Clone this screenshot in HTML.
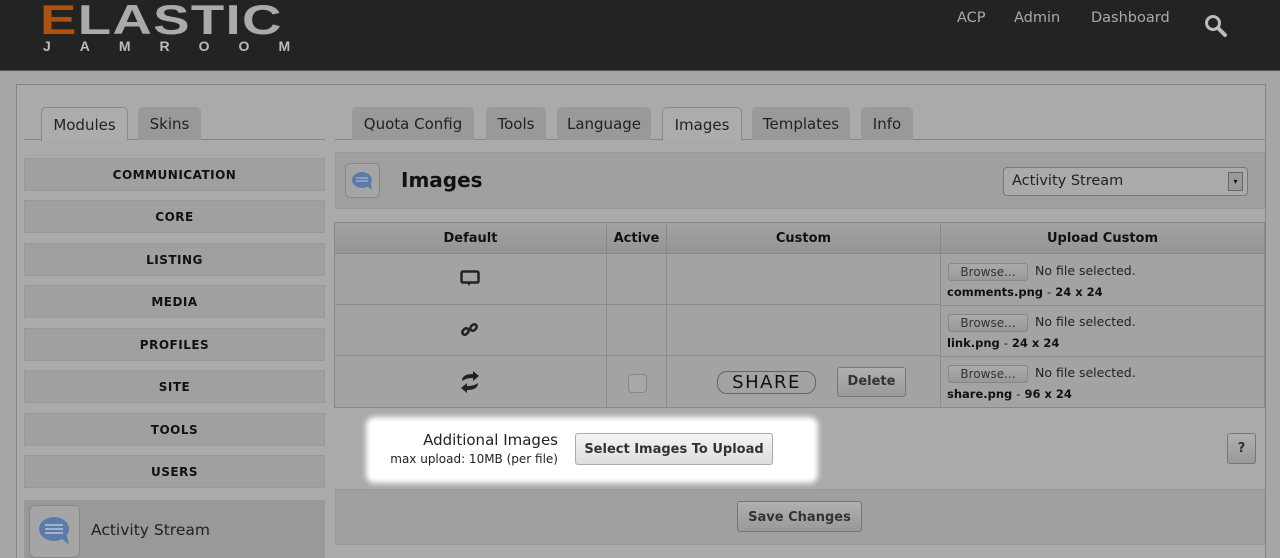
<!DOCTYPE html>
<html><head><meta charset="utf-8"><style>
*{box-sizing:border-box;margin:0;padding:0}
html,body{width:1280px;height:558px;overflow:hidden}
body{background:#a6a6a6;font-family:"DejaVu Sans","Liberation Sans",sans-serif;color:#111;position:relative}
.hdr{position:absolute;left:0;top:0;width:1280px;height:71px;background:#232323;border-bottom:1px solid #555}
.logo1{position:absolute;left:40px;top:-1px;font:bold 42px "Liberation Sans",sans-serif;line-height:42px;letter-spacing:1px;color:#aaa;transform:scaleX(1.3);transform-origin:left}
.logo1 span{color:#b0520f}
.logo2{position:absolute;left:43px;top:38px;font:bold 14px "Liberation Sans",sans-serif;color:#bbb;letter-spacing:29px}
.nav{position:absolute;top:10px;font-size:14.5px;color:#aaa}
.box{position:absolute;left:16px;top:84px;width:1250px;height:480px;border:1px solid #858585;background:#aaa}
.tab{position:absolute;top:107px;height:33px;background:#999;border-radius:5px 5px 0 0;font-size:15px;text-align:center;line-height:34px;color:#222}
.tab.act{background:#acacac;border:1px solid #8a8a8a;border-bottom:none;height:34px}
.line{position:absolute;top:139px;height:1px;background:#878787}
.ni{position:absolute;left:24px;width:301px;height:33px;background:#a0a0a0;border:1px solid #999;font:bold 12px "DejaVu Sans",sans-serif;text-align:center;line-height:33px;letter-spacing:.5px}
.abs{position:absolute}
.th{position:absolute;top:223px;height:31px;font-weight:bold;font-size:13px;text-align:center;line-height:32px;background:linear-gradient(#a2a2a2,#959595);border-right:1px solid #888;border-bottom:1px solid #888}
.td{position:absolute;height:51px;border-right:1px solid #8c8c8c;border-bottom:1px solid #8c8c8c}
.br{position:absolute;left:948px;width:80px;height:18px;border:1px solid #888;border-radius:3px;background:linear-gradient(#aaa,#999);font-size:12px;text-align:center;line-height:16px;color:#333}
.nf{position:absolute;left:1035px;font-size:12.5px;color:#222}
.fn{position:absolute;left:947px;font-size:11.5px;font-weight:bold;color:#111}
.btn{position:absolute;border:1px solid #777;border-radius:3px;background:linear-gradient(#b0b0b0,#999);font-weight:bold;font-size:13px;text-align:center;color:#333}
</style></head><body>
<div class="hdr">
<div class="logo1"><span>E</span>LASTIC</div>
<div class="logo2">JAMROOM</div>
<div class="nav" style="left:957px">ACP</div>
<div class="nav" style="left:1014px">Admin</div>
<div class="nav" style="left:1091px">Dashboard</div>
<svg class="abs" style="left:1203px;top:12px" width="26" height="26" viewBox="0 0 26 26"><circle cx="10" cy="11" r="6.5" fill="none" stroke="#bbb" stroke-width="3"/><path d="M15 16l7 7" stroke="#bbb" stroke-width="4" stroke-linecap="round"/></svg>
</div>
<div class="box"></div>
<div class="line" style="left:24px;width:301px"></div>
<div class="line" style="left:335px;width:930px"></div>
<div class="tab act" style="left:41px;width:87px">Modules</div>
<div class="tab" style="left:138px;width:63px">Skins</div>
<div class="tab" style="left:352px;width:122px">Quota Config</div>
<div class="tab" style="left:486px;width:60px">Tools</div>
<div class="tab" style="left:557px;width:94px">Language</div>
<div class="tab act" style="left:662px;width:80px">Images</div>
<div class="tab" style="left:752px;width:98px">Templates</div>
<div class="tab" style="left:861px;width:52px">Info</div>

<div class="ni" style="top:158px">COMMUNICATION</div>
<div class="ni" style="top:200px">CORE</div>
<div class="ni" style="top:243px">LISTING</div>
<div class="ni" style="top:285px">MEDIA</div>
<div class="ni" style="top:328px">PROFILES</div>
<div class="ni" style="top:370px">SITE</div>
<div class="ni" style="top:413px">TOOLS</div>
<div class="ni" style="top:455px">USERS</div>
<div class="abs" style="left:24px;top:500px;width:301px;height:60px;background:#999"></div>
<div class="abs" style="left:29px;top:505px;width:51px;height:53px;border:1px solid #888;border-radius:6px;background:#a5a5a5"></div>
<svg class="abs" style="left:35px;top:514px" width="40" height="36" viewBox="0 0 40 36"><ellipse cx="19" cy="15" rx="15" ry="12" fill="#5d7ba8"/><path d="M26 24l8 7-2-9z" fill="#5d7ba8"/><path d="M10 11h18M10 15h18M10 19h18" stroke="#b8c4d6" stroke-width="1.5"/></svg>
<div class="abs" style="left:91px;top:521px;font-size:15.5px;color:#222">Activity Stream</div>

<div class="abs" style="left:335px;top:152px;width:930px;height:57px;background:#a0a0a0;border:1px solid #999"></div>
<div class="abs" style="left:345px;top:163px;width:35px;height:35px;border:1px solid #888;border-radius:5px;background:#a5a5a5"></div>
<svg class="abs" style="left:350px;top:170px" width="26" height="22" viewBox="0 0 26 22"><ellipse cx="12" cy="10" rx="10" ry="8" fill="#5d7ba8"/><path d="M17 16l5 4-1-6z" fill="#5d7ba8"/><path d="M6 8h12M6 11h12" stroke="#b8c4d6" stroke-width="1"/></svg>
<div class="abs" style="left:401px;top:168px;font-size:20px;font-weight:bold">Images</div>
<div class="abs" style="left:1003px;top:167px;width:245px;height:29px;border:1px solid #777;border-radius:4px;background:#aaa;font-size:14.5px;line-height:27px;padding-left:8px;color:#222">Activity Stream</div>
<div class="abs" style="left:1228px;top:172px;width:15px;height:19px;background:#999;border:1px solid #666;font-size:8px;text-align:center;line-height:17px">▾</div>

<div class="abs" style="left:334px;top:222px;width:931px;height:186px;border:1px solid #888;background:#a3a3a3"></div>
<div class="th" style="left:335px;width:272px">Default</div>
<div class="th" style="left:607px;width:60px">Active</div>
<div class="th" style="left:667px;width:274px">Custom</div>
<div class="th" style="left:941px;width:323px;border-right:none">Upload Custom</div>
<div class="td" style="left:335px;top:254px;width:272px"></div><div class="td" style="left:607px;top:254px;width:60px"></div><div class="td" style="left:667px;top:254px;width:274px"></div>
<div class="td" style="left:335px;top:305px;width:272px"></div><div class="td" style="left:607px;top:305px;width:60px"></div><div class="td" style="left:667px;top:305px;width:274px"></div>
<div class="td" style="left:335px;top:356px;width:272px;border-bottom:none"></div><div class="td" style="left:607px;top:356px;width:60px;border-bottom:none"></div><div class="td" style="left:667px;top:356px;width:274px;border-bottom:none"></div>
<div class="abs" style="left:941px;top:305px;width:323px;height:1px;background:#8c8c8c"></div>
<div class="abs" style="left:941px;top:356px;width:323px;height:1px;background:#8c8c8c"></div>
<svg class="abs" style="left:460px;top:270px" width="20" height="18" viewBox="0 0 20 18"><rect x="1.5" y="1.5" width="17" height="11" rx="1.5" fill="none" stroke="#222" stroke-width="2.5"/><path d="M7 12l2 4 2-4z" fill="#222"/></svg>
<svg class="abs" style="left:460px;top:320px" width="20" height="20" viewBox="0 0 20 20"><g fill="none" stroke="#222" stroke-width="2.5"><rect x="2" y="9" width="7" height="5" rx="2.5" transform="rotate(-45 5.5 11.5)"/><rect x="10" y="5" width="7" height="5" rx="2.5" transform="rotate(-45 13.5 7.5)"/></g></svg>
<svg class="abs" style="left:459px;top:370px" width="22" height="24" viewBox="0 0 22 24"><path d="M3 11c0-5 4-7 11-7V1l6 5-6 5V8c-5 0-8 1-11 3z" fill="#222"/><path d="M19 13c0 5-4 7-11 7v3l-6-5 6-5v3c5 0 8-1 11-3z" fill="#222"/></svg>
<div class="abs" style="left:628px;top:374px;width:19px;height:19px;border:1px solid #888;border-radius:4px;background:#a8a8a8"></div>
<div class="abs" style="left:717px;top:371px;width:99px;height:23px;border:1px solid #666;border-radius:10px;font-size:18px;text-align:center;line-height:21px;letter-spacing:1.5px">SHARE</div>
<div class="btn" style="left:837px;top:367px;width:69px;height:30px;line-height:28px">Delete</div>
<div class="br" style="top:263px">Browse...</div><div class="nf" style="top:263px">No file selected.</div><div class="fn" style="top:285px">comments.png <span style="font-weight:normal">-</span> 24 x 24</div>
<div class="br" style="top:314px">Browse...</div><div class="nf" style="top:314px">No file selected.</div><div class="fn" style="top:336px">link.png <span style="font-weight:normal">-</span> 24 x 24</div>
<div class="br" style="top:365px">Browse...</div><div class="nf" style="top:365px">No file selected.</div><div class="fn" style="top:387px">share.png <span style="font-weight:normal">-</span> 96 x 24</div>

<div class="abs" style="left:370px;top:421px;width:444px;height:58px;background:#fff;box-shadow:0 0 6px 4px #fff;border-radius:4px"></div>
<div class="abs" style="left:370px;top:431px;width:188px;text-align:right;font-size:15px;color:#222">Additional Images</div>
<div class="abs" style="left:360px;top:452px;width:198px;text-align:right;font-size:12px;color:#222">max upload: 10MB (per file)</div>
<div class="btn" style="left:575px;top:433px;width:198px;height:32px;line-height:32px;background:linear-gradient(#f4f4f4,#ddd);border-color:#aaa">Select Images To Upload</div>
<div class="btn" style="left:1227px;top:433px;width:29px;height:31px;line-height:29px">?</div>

<div class="abs" style="left:335px;top:489px;width:930px;height:56px;background:#a0a0a0;border:1px solid #999"></div>
<div class="btn" style="left:737px;top:501px;width:125px;height:31px;line-height:31px">Save Changes</div>
</body></html>
